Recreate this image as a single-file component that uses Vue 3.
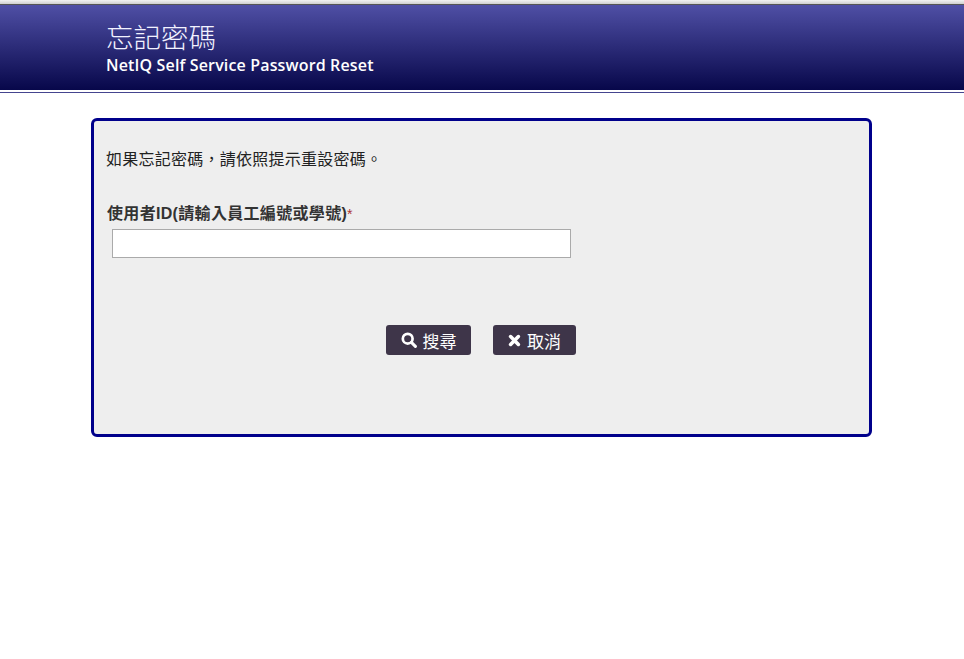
<template>
  <div class="page">
    <div class="header">
      <div class="header-title">忘記密碼</div>
      <div class="header-sub">NetIQ Self Service Password Reset</div>
    </div>
    <div class="wrapper">
      <p class="intro">如果忘記密碼，請依照提示重設密碼。</p>
      <label class="field-label">使用者ID(請輸入員工編號或學號)<span class="req">*</span></label>
      <input class="field" type="text" />
      <div class="buttons">
        <button class="btn btn-search" type="button">
          <svg class="icon" viewBox="0 0 16 16" width="16" height="16">
            <circle cx="6.7" cy="6.7" r="4.9" fill="none" stroke="#fff" stroke-width="2.7" />
            <path d="M10.4 10.4L14.4 14.4" stroke="#fff" stroke-width="3" stroke-linecap="round" />
          </svg>
          搜尋
        </button>
        <button class="btn btn-cancel" type="button">
          <svg class="icon" viewBox="0 0 16 16" width="13" height="13">
            <path d="M3.2 3.2L12.8 12.8M12.8 3.2L3.2 12.8" stroke="#fff" stroke-width="4.4" stroke-linecap="round" />
          </svg>
          取消
        </button>
      </div>
    </div>
  </div>
</template>

<script setup>
</script>

<style scoped>
.page {
  font-family: "Liberation Sans", "Noto Sans CJK TC", sans-serif;
  background: #fff;
  min-height: 659px;
  padding-top: 4px;
  box-sizing: border-box;
  background-image: linear-gradient(to bottom, #f2f2f2, #cfcfcf);
  background-size: 100% 4px;
  background-repeat: no-repeat;
}
.header {
  height: 89px;
  box-sizing: border-box;
  padding: 16px 0 0 106px;
  background: linear-gradient(to bottom, #4f4fa5 0%, #07074a 100%);
  background-clip: padding-box;
  border-top: 1px solid #555;
  border-bottom: 3px solid transparent;
  position: relative;
}
.header::after {
  content: "";
  position: absolute;
  left: 0;
  right: 0;
  bottom: -3px;
  height: 1px;
  background: #45458f;
}
.header-title {
  font-size: 27.5px;
  line-height: 35px;
  color: #f2f2ff;
  font-weight: 300;
}
.header-sub {
  font-family: "Open Sans", sans-serif;
  font-size: 16px;
  line-height: 18px;
  font-weight: 600;
  color: #fff;
  letter-spacing: 0.15px;
}
.wrapper {
  width: 781px;
  height: 319px;
  box-sizing: border-box;
  margin: 25px 0 0 91px;
  padding: 29px 12px 0;
  background: #eee;
  border: 3px solid #00008b;
  border-radius: 6px;
}
.intro {
  margin: 0;
  font-size: 16px;
  line-height: 20px;
  color: #222;
  letter-spacing: 0.25px;
}
.field-label {
  display: block;
  margin: 34px 0 0 1px;
  font-size: 16px;
  line-height: 20px;
  font-weight: 700;
  color: #333;
  letter-spacing: 0.32px;
}
.req {
  color: #a33;
  font-weight: 400;
  font-size: 14px;
}
.field {
  display: block;
  width: 459px;
  height: 29px;
  box-sizing: border-box;
  margin: 5px 0 0 6px;
  background: #fff;
  border: 1px solid #aaa;
  padding: 0 6px;
}
.buttons {
  display: flex;
  gap: 22px;
  margin: 67px 0 0 280px;
}
.btn {
  display: flex;
  align-items: center;
  justify-content: center;
  gap: 6px;
  height: 30px;
  padding: 0;
  background: #3e3549;
  border: none;
  border-radius: 3px;
  color: #fff;
  font-family: "Liberation Sans", "Noto Sans CJK TC", sans-serif;
  font-size: 17px;
}
.btn-search {
  width: 85px;
}
.btn-cancel {
  width: 83px;
}
.icon {
  flex: none;
}
</style>
